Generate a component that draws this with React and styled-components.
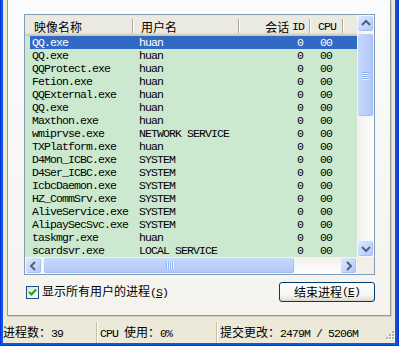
import React from "react";
import styled, { createGlobalStyle } from "styled-components";

const GlobalStyle = createGlobalStyle`
  html, body { margin:0; padding:0; background:#0A58E6; }
  body { width:399px; height:346px; overflow:hidden; }
  * { box-sizing:border-box; }
`;

const processes = [
  ["QQ.exe", "huan"],
  ["QQ.exe", "huan"],
  ["QQProtect.exe", "huan"],
  ["Fetion.exe", "huan"],
  ["QQExternal.exe", "huan"],
  ["QQ.exe", "huan"],
  ["Maxthon.exe", "huan"],
  ["wmiprvse.exe", "NETWORK SERVICE"],
  ["TXPlatform.exe", "huan"],
  ["D4Mon_ICBC.exe", "SYSTEM"],
  ["D4Ser_ICBC.exe", "SYSTEM"],
  ["IcbcDaemon.exe", "SYSTEM"],
  ["HZ_CommSrv.exe", "SYSTEM"],
  ["AliveService.exe", "SYSTEM"],
  ["AlipaySecSvc.exe", "SYSTEM"],
  ["taskmgr.exe", "huan"],
  ["scardsvr.exe", "LOCAL SERVICE"],
];

const Frame = styled.div`
  width:399px;
  height:346px;
  padding:0 4px 3px 3px;
  background:#0A58E6;
  box-shadow: inset 1px 0 #0831D9, inset -1px 0 #0831D9, inset 0 -1px #0831D9, inset -3px 0 #0B4FD0;
`;

const Window = styled.div`
  height:343px;
  display:flex;
  flex-direction:column;
  background:#ECE9D8;
  font-family:"Noto Sans CJK SC", sans-serif;
  font-size:12px;
  color:#000;
`;

const TabPage = styled.div`
  margin:0 4px;
  height:316px;
  border:1px solid #919B9C;
  border-top:none;
  background:linear-gradient(#FCFCFE, #F4F3EE);
  padding:14px 15px 13px 16px;
  box-shadow:1px 1px 0 #D0CEBF;
`;

const Mono = styled.span`
  font-family:"Liberation Mono", monospace;
  font-size:11.5px;
  letter-spacing:-0.9px;
`;

const ListView = styled.div`
  border:1px solid #7F9DB9;
  display:grid;
  grid-template-columns:332px 17px;
  grid-template-rows:242px 17px;
  background:#CCE8CF;
`;

const Content = styled.div`
  display:flex;
  flex-direction:column;
  overflow:hidden;
`;

const Header = styled.div`
  height:21px;
  flex:none;
  display:flex;
  align-items:center;
  background:#EBEAE2;
  box-shadow: inset 0 -1px #CBC7B8, inset 0 -2px #D6D2C2, inset 0 -3px #E2DECD;
  line-height:14px;
  padding-top:2px;
`;

const HeadCell = styled.div`
  width:${p => p.$w}px;
  flex:none;
  display:flex;
  justify-content:${p => (p.$right ? "flex-end" : "flex-start")};
  padding:${p => (p.$right ? `0 ${p.$pad}px 0 0` : `0 0 0 ${p.$pad}px`)};
  white-space:nowrap;
`;

const Divider = styled.div`
  width:2px;
  height:14px;
  flex:none;
  margin-top:-2px;
  border-left:1px solid #ACA899;
  background:#FFFFFF;
`;

const Rows = styled.div`
  display:flex;
  flex-direction:column;
`;

const Row = styled.div`
  height:13px;
  line-height:13px;
  display:flex;
  margin-left:5px;
  font-family:"Liberation Mono", monospace;
  font-size:11.5px;
  letter-spacing:-0.9px;
  white-space:nowrap;
  background:${p => (p.$selected ? "#316AC5" : "transparent")};
  color:${p => (p.$selected ? "#FFFFFF" : "#000000")};
`;

const Cell = styled.div`
  width:${p => p.$w}px;
  flex:none;
  text-align:${p => (p.$right ? "right" : "left")};
  padding:${p => (p.$right ? `0 ${p.$pad}px 0 0` : `0 0 0 ${p.$pad}px`)};
`;

const VScroll = styled.div`
  display:flex;
  flex-direction:column;
  background:linear-gradient(to right, #F3F1EC, #FEFEFB);
`;

const HScroll = styled.div`
  display:flex;
  background:linear-gradient(#F3F1EC, #FEFEFB);
`;

const Corner = styled.div`
  background:#F1EFE6;
`;

const ScrollBtn = styled.div`
  width:17px;
  height:17px;
  flex:none;
  border:1px solid #F4F7FE;
  border-radius:3px;
  background:linear-gradient(135deg, #DDE8FE 0%, #C6D7FC 55%, #B1C6F5 100%);
  box-shadow:inset -1px -1px 0 #A9BFF0;
  display:flex;
  align-items:center;
  justify-content:center;
`;

const Thumb = styled.div`
  flex:none;
  ${p => (p.$vertical ? `height:${p.$size}px; margin-top:1px; flex-direction:column;` : `width:${p.$size}px; margin-left:1px;`)}
  border:1px solid #EEF3FE;
  border-radius:3px;
  background:${p =>
    p.$vertical
      ? "linear-gradient(to right, #C8D8FC, #BBCEFA 60%, #B0C5F6)"
      : "linear-gradient(#C8D8FC, #BBCEFA 60%, #B0C5F6)"};
  box-shadow:inset -1px -1px 0 #A6BDF0;
  display:flex;
  align-items:center;
  justify-content:center;
  gap:1px;
`;

const Grip = styled.div`
  ${p => (p.$vertical ? "width:7px; height:1px;" : "width:1px; height:7px;")}
  background:#8DAFF3;
  box-shadow:${p => (p.$vertical ? "0 1px #EEF3FE" : "1px 0 #EEF3FE")};
`;

const Track = styled.div`
  flex:1;
`;

const Controls = styled.div`
  margin-top:7px;
  height:20px;
  display:flex;
  align-items:center;
  justify-content:space-between;
`;

const CheckLabel = styled.label`
  display:flex;
  align-items:center;
  gap:3px;
  padding-left:2px;
  line-height:14px;
`;

const CheckBox = styled.span`
  width:13px;
  height:13px;
  border:1px solid #1C5180;
  background:linear-gradient(135deg, #DCDCD7, #FFFFFF);
  display:flex;
  align-items:center;
  justify-content:center;
`;

const Underline = styled.u`
  text-decoration:underline;
`;

const Button = styled.button`
  width:96px;
  height:20px;
  padding:0;
  border:1px solid #003C74;
  border-radius:3px;
  background:linear-gradient(#FFFFFF, #F4F4F0 70%, #E3E1D8 92%, #D6D0C5);
  font-family:"Noto Sans CJK SC", sans-serif;
  font-size:12px;
  line-height:14px;
  color:#000;
  display:flex;
  align-items:center;
  justify-content:center;
`;

const StatusBar = styled.div`
  margin-top:4px;
  height:23px;
  display:flex;
  line-height:14px;
`;

const Pane = styled.div`
  ${p => (p.$w ? `width:${p.$w}px; flex:none;` : "flex:1;")}
  padding:3px 0 0 ${p => p.$pad}px;
  display:flex;
  align-items:center;
  white-space:pre;
`;

const Sep = styled.div`
  width:2px;
  flex:none;
  margin-top:2px;
  border-left:1px solid #C2BFB0;
  background:#FFFFFF;
`;

const Sizer = styled.svg`
  margin-left:auto;
  align-self:flex-end;
  margin-bottom:1px;
`;

function Arrow({ dir }) {
  const pts = {
    up: "4,9 8,5 12,9",
    down: "4,6 8,10 12,6",
    left: "9,4 5,8 9,12",
    right: "6,4 10,8 6,12",
  }[dir];
  return (
    <svg width="15" height="15" viewBox="0 0 15 15">
      <polyline points={pts} fill="none" stroke="#4D6185" strokeWidth="2" />
    </svg>
  );
}

function Grips({ vertical }) {
  return [0, 1, 2, 3].map(i => <Grip key={i} $vertical={vertical} />);
}

export default function App() {
  return (
    <>
      <GlobalStyle />
      <Frame>
        <Window>
          <TabPage>
            <ListView>
              <Content>
                <Header>
                  <HeadCell $w={107} $pad={9}>映像名称</HeadCell>
                  <Divider />
                  <HeadCell $w={104} $pad={7}>用户名</HeadCell>
                  <Divider />
                  <HeadCell $w={69} $right $pad={5}>
                    会话&nbsp;<Mono>ID</Mono>
                  </HeadCell>
                  <Divider />
                  <HeadCell $w={31} $right $pad={6}>
                    <Mono>CPU</Mono>
                  </HeadCell>
                  <Divider />
                </Header>
                <Rows>
                  {processes.map(([name, user], i) => (
                    <Row key={i} $selected={i === 0}>
                      <Cell $w={103} $pad={2}>{name}</Cell>
                      <Cell $w={106} $pad={6}>{user}</Cell>
                      <Cell $w={71} $right $pad={7}>0</Cell>
                      <Cell $w={34} $right $pad={12}>00</Cell>
                    </Row>
                  ))}
                </Rows>
              </Content>
              <VScroll>
                <ScrollBtn><Arrow dir="up" /></ScrollBtn>
                <Thumb $vertical $size={84}><Grips vertical /></Thumb>
                <Track />
                <ScrollBtn><Arrow dir="down" /></ScrollBtn>
              </VScroll>
              <HScroll>
                <ScrollBtn><Arrow dir="left" /></ScrollBtn>
                <Thumb $size={252}><Grips /></Thumb>
                <Track />
                <ScrollBtn><Arrow dir="right" /></ScrollBtn>
              </HScroll>
              <Corner />
            </ListView>
            <Controls>
              <CheckLabel>
                <CheckBox>
                  <svg width="9" height="9" viewBox="0 0 9 9">
                    <polyline points="1,4 3.5,6.5 8,1.5" fill="none" stroke="#21A121" strokeWidth="2" />
                  </svg>
                </CheckBox>
                <span>
                  显示所有用户的进程<Mono>(<Underline>S</Underline>)</Mono>
                </span>
              </CheckLabel>
              <Button>
                结束进程<Mono>(<Underline>E</Underline>)</Mono>
              </Button>
            </Controls>
          </TabPage>
          <StatusBar>
            <Pane $w={93} $pad={0}>
              <span>进程数：<Mono>39</Mono></span>
            </Pane>
            <Sep />
            <Pane $w={118} $pad={2}>
              <span><Mono>CPU </Mono>使用：<Mono>0%</Mono></span>
            </Pane>
            <Sep />
            <Pane $pad={2}>
              <span>提交更改：<Mono>2479M / 5206M</Mono></span>
              <Sizer width="12" height="12" viewBox="0 0 12 12">
                {[[9, 1], [6, 4], [9, 4], [3, 7], [6, 7], [9, 7]].map(([x, y], i) => (
                  <g key={i}>
                    <rect x={x + 1} y={y + 1} width="2" height="2" fill="#FFFFFF" />
                    <rect x={x} y={y} width="2" height="2" fill="#B5B2A3" />
                  </g>
                ))}
              </Sizer>
            </Pane>
          </StatusBar>
        </Window>
      </Frame>
    </>
  );
}
